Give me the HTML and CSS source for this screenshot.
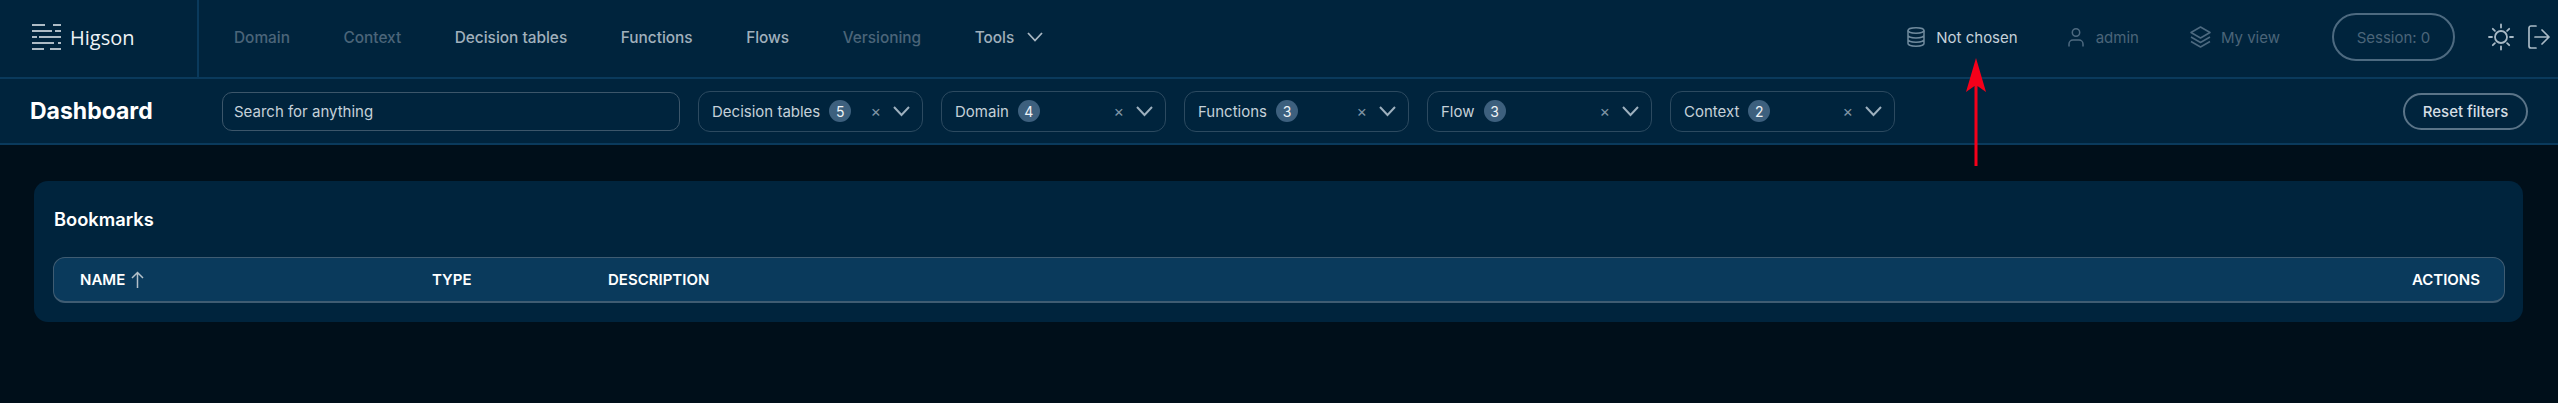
FILE: index.html
```html
<!DOCTYPE html>
<html lang="en">
<head>
<meta charset="utf-8">
<title>Higson Dashboard</title>
<link rel="stylesheet" href="styles.css">
</head>
<body>
<header class="topbar">
  <div class="brand">
    <svg class="brand-icon" width="30" height="26" viewBox="0 0 30 26" fill="none" stroke="#e6edf2" stroke-width="1.6">
      <path d="M1 1h13M22 1h8M1 7h20M24 7h6M1 13h5M8 13h22M1 19h22M27 19h3M1 25h12M19 25h11"/>
    </svg>
    <span class="brand-name">Higson</span>
  </div>
  <nav class="nav">
    <a class="nav-item muted">Domain</a>
    <a class="nav-item muted">Context</a>
    <a class="nav-item">Decision tables</a>
    <a class="nav-item">Functions</a>
    <a class="nav-item">Flows</a>
    <a class="nav-item muted">Versioning</a>
    <a class="nav-item tools">Tools
      <svg width="16" height="10" viewBox="0 0 16 10" fill="none" stroke="#a9b8c3" stroke-width="1.8"><path d="M1 1l7 7.5L15 1"/></svg>
    </a>
  </nav>
  <div class="status">
    <div class="status-item db">
      <svg width="18" height="20" viewBox="0 0 18 20" fill="none" stroke="#6f8a9d" stroke-width="1.5"><ellipse cx="9" cy="3.5" rx="8" ry="2.7"/><path d="M1 3.5v13c0 1.5 3.6 2.7 8 2.7s8-1.2 8-2.7v-13M1 8.2c0 1.5 3.6 2.7 8 2.7s8-1.2 8-2.7M1 12.6c0 1.5 3.6 2.7 8 2.7s8-1.2 8-2.7"/></svg>
      <span class="db-label">Not chosen</span>
    </div>
    <div class="status-item user">
      <svg width="16" height="19" viewBox="0 0 16 19" fill="none" stroke="#4d6a80" stroke-width="1.5"><circle cx="8" cy="4.5" r="3.7"/><path d="M1 18.5v-2.5a4 4 0 0 1 4-4h6a4 4 0 0 1 4 4v2.5"/></svg>
      <span>admin</span>
    </div>
    <div class="status-item view">
      <svg width="21" height="22" viewBox="0 0 21 22" fill="none" stroke="#4d6a80" stroke-width="1.5" stroke-linejoin="round"><path d="M10.5 1L20 6.5l-9.500 5.500L1 6.500z"/><path d="M1 11l9.500 5.500L20 11M1 15.500L10.500 21 20 15.500"/></svg>
      <span>My view</span>
    </div>
    <div class="session">Session: 0</div>
    <svg class="sun" width="26" height="28" viewBox="0 0 26 28" fill="none" stroke="#a9bac6" stroke-width="1.8" stroke-linecap="round"><circle cx="13" cy="14" r="6"/><path d="M13 1.500v3M13 23.500v3M1 14h3M22 14h3M4.800 5.800l2.100 2.100M19.100 20.100l2.100 2.100M4.800 22.200l2.100-2.100M19.100 7.900l2.100-2.100"/></svg>
    <svg class="logout" width="22" height="24" viewBox="0 0 22 24" fill="none" stroke="#a9bac6" stroke-width="1.7" stroke-linecap="round" stroke-linejoin="round"><path d="M8 1H3a2 2 0 0 0-2 2v18a2 2 0 0 0 2 2h5M7 12h14M14 5l7 7-7 7"/></svg>
  </div>
</header>

<section class="filters">
  <h1 class="title">Dashboard</h1>
  <div class="search">Search for anything</div>
  <div class="filter"><span class="filter-label">Decision tables</span><span class="badge">5</span><span class="spacer"></span><span class="clear">×</span><svg class="chev" width="17" height="11" viewBox="0 0 17 11" fill="none" stroke="#9db0be" stroke-width="2"><path d="M1 1l7.500 8L16 1"/></svg></div>
  <div class="filter"><span class="filter-label">Domain</span><span class="badge">4</span><span class="spacer"></span><span class="clear">×</span><svg class="chev" width="17" height="11" viewBox="0 0 17 11" fill="none" stroke="#9db0be" stroke-width="2"><path d="M1 1l7.500 8L16 1"/></svg></div>
  <div class="filter"><span class="filter-label">Functions</span><span class="badge">3</span><span class="spacer"></span><span class="clear">×</span><svg class="chev" width="17" height="11" viewBox="0 0 17 11" fill="none" stroke="#9db0be" stroke-width="2"><path d="M1 1l7.500 8L16 1"/></svg></div>
  <div class="filter"><span class="filter-label">Flow</span><span class="badge">3</span><span class="spacer"></span><span class="clear">×</span><svg class="chev" width="17" height="11" viewBox="0 0 17 11" fill="none" stroke="#9db0be" stroke-width="2"><path d="M1 1l7.500 8L16 1"/></svg></div>
  <div class="filter"><span class="filter-label">Context</span><span class="badge">2</span><span class="spacer"></span><span class="clear">×</span><svg class="chev" width="17" height="11" viewBox="0 0 17 11" fill="none" stroke="#9db0be" stroke-width="2"><path d="M1 1l7.500 8L16 1"/></svg></div>
  <button class="reset">Reset filters</button>
</section>

<main class="content">
  <section class="card">
    <h2 class="card-title">Bookmarks</h2>
    <div class="thead">
      <div class="th th-name">NAME
        <svg width="13" height="17" viewBox="0 0 13 17" fill="none" stroke="#b4c0c9" stroke-width="1.500"><path d="M6.500 17V1.500M1 7l5.500-5.500L12 7"/></svg>
      </div>
      <div class="th th-type">TYPE</div>
      <div class="th th-desc">DESCRIPTION</div>
      <div class="th th-actions">ACTIONS</div>
    </div>
  </section>
</main>

<svg class="arrow" width="20" height="108" viewBox="0 0 20 108" fill="#f5001a"><path d="M10 0L20 34L11.500 28V108H8.500V28L0 34z"/></svg>
</body>
</html>
```
FILE: styles.css
```css
* { box-sizing: border-box; }
html, body { margin: 0; height: 100%; }
body {
  background: #000f1a;
  color: #fff;
  font-family: "Inter", "Liberation Sans", sans-serif;
  overflow: hidden;
  position: relative;
}
.topbar {
  display: flex;
  align-items: center;
  height: 79px;
  background: #00243d;
  border-bottom: 2px solid #0a3a5c;
}
.brand {
  display: flex;
  align-items: center;
  width: 199px;
  height: 100%;
  padding: 0 0 3px 31px;
  gap: 9px;
  border-right: 2px solid #0a3a5c;
}
.brand-name { font-size: 20px; color: #eef3f6; font-family: "Open Sans", sans-serif; }
.nav { display: flex; align-items: center; gap: 53.500px; padding: 0 0 3px 35px; flex: 1; }
.nav-item { font-size: 15.400px; font-weight: 500; color: #a0b0bc; white-space: nowrap; }
.nav-item.muted { color: #4b6579; }
.tools { display: flex; align-items: center; gap: 13px; }
.status { display: flex; align-items: center; padding: 0 8px 3px 0; }
.status-item { display: flex; align-items: center; font-size: 15px; color: #4b6579; white-space: nowrap; }
.db { gap: 11px; margin-right: 50px; }
.db-label { color: #c5d1d9; }
.user { gap: 12px; margin-right: 51px; }
.view { gap: 10px; margin-right: 52px; }
.session {
  width: 123px;
  height: 48px;
  border: 2px solid #4d6a80;
  border-radius: 24px;
  display: flex;
  align-items: center;
  justify-content: center;
  font-size: 15px;
  color: #4b6579;
  margin-right: 33px;
}
.logout { margin-left: 14px; }
.filters {
  display: flex;
  align-items: center;
  height: 66px;
  background: #00243d;
  border-bottom: 2px solid #0a3a5c;
  padding: 0 30px;
}
.title { margin: 0; width: 192px; font-size: 23px; font-weight: 700; color: #fff; }
.search {
  width: 458px;
  height: 39px;
  border: 1px solid #3c566a;
  border-radius: 10px;
  padding-left: 11px;
  display: flex;
  align-items: center;
  font-size: 15px;
  color: #c5d1d9;
  margin-right: 18px;
}
.filter {
  display: flex;
  align-items: center;
  width: 225px;
  height: 41px;
  border: 1px solid #2c4a60;
  border-radius: 12px;
  padding: 0 12px 0 13px;
  margin-right: 18px;
  font-size: 15px;
  color: #c5d1d9;
}
.badge {
  display: flex;
  align-items: center;
  justify-content: center;
  width: 22px;
  height: 22px;
  border-radius: 50%;
  background: #3d607e;
  color: #eef3f6;
  font-size: 14px;
  margin-left: 9px;
}
.spacer { flex: 1; }
.clear { color: #7f94a4; font-size: 16px; margin-right: 12px; }
.reset {
  margin-left: auto;
  width: 125px;
  height: 37px;
  border: 2px solid #5a7488;
  border-radius: 19px;
  background: transparent;
  color: #d5dee4;
  font: 500 15px "Inter", sans-serif;
  padding: 0;
}
.content { padding: 36px 35px 0 34px; }
.card {
  height: 141px;
  background: #00243d;
  border-radius: 14px;
  padding: 0 18px 0 19px;
}
.card-title {
  margin: 0;
  height: 76px;
  display: flex;
  align-items: center;
  padding-left: 1px;
  font-size: 18.300px;
  font-weight: 600;
  color: #fff;
}
.thead {
  display: flex;
  align-items: center;
  height: 46px;
  background: #0a3a5c;
  border: 1px solid #3f5c72;
  border-bottom-width: 2px;
  border-radius: 12px;
  padding: 0 24px 0 26px;
}
.th { font-size: 15px; font-weight: 600; color: #fff; }
.th-name { width: 352px; display: flex; align-items: center; gap: 6px; }
.th-type { width: 176px; }
.th-desc { flex: 1; }
.arrow { position: absolute; left: 1966px; top: 58px; }
```
